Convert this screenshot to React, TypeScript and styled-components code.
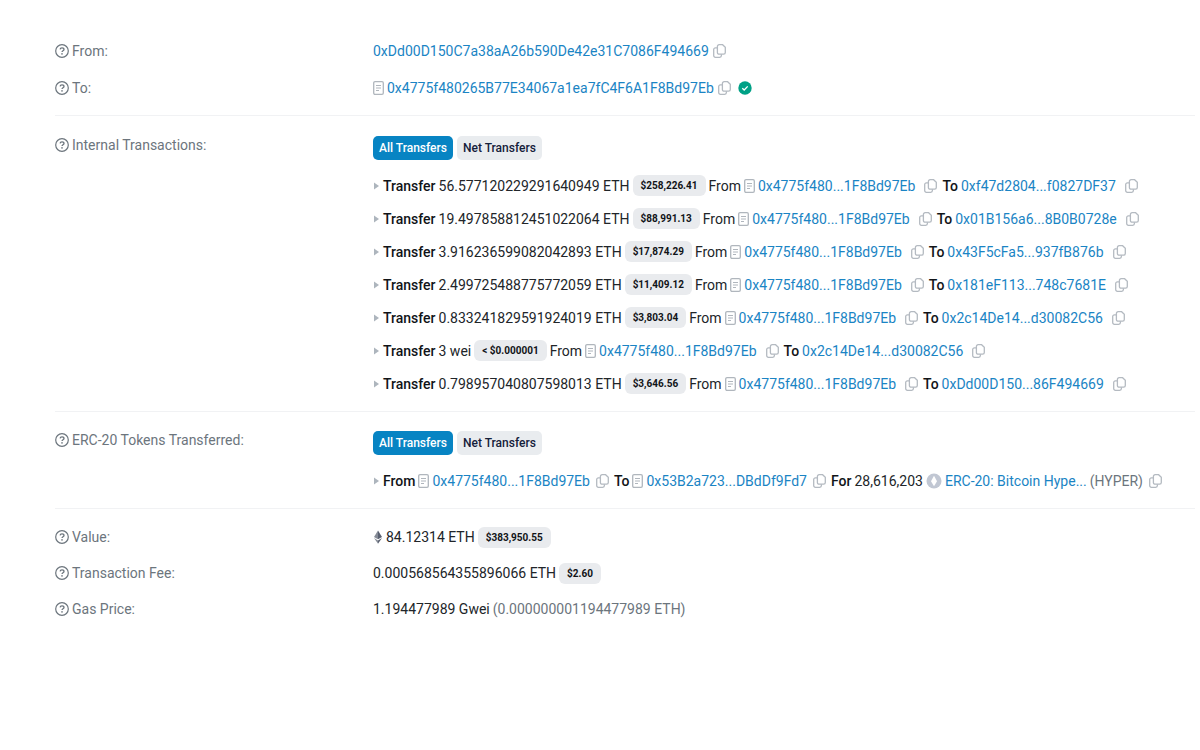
import React from "react";
import styled, { createGlobalStyle } from "styled-components";

const GlobalStyle = createGlobalStyle`
  *, *::before, *::after { box-sizing: border-box; }
  body {
    margin: 0;
    background: #ffffff;
    color: #212529;
    font-family: Roboto, "Liberation Sans", sans-serif;
    font-size: 14px;
    line-height: 24px;
  }
`;

const Page = styled.main`
  padding: 39px 5px 39px 55px;
`;

const Section = styled.dl<{ $top?: number; $bottom?: number; $gap?: number }>`
  display: flex;
  flex-direction: column;
  gap: ${(p) => p.$gap ?? 0}px;
  margin: 0;
  padding: ${(p) => p.$top ?? 0}px 0 ${(p) => p.$bottom ?? 0}px;
  & + & {
    border-top: 1px solid #f1f2f4;
  }
`;

const Field = styled.div`
  display: grid;
  grid-template-columns: 318px minmax(0, 1fr);
  align-items: start;
`;

const Label = styled.dt<{ $lift?: boolean }>`
  display: flex;
  align-items: center;
  gap: 3px;
  color: #6c757d;
  margin-top: ${(p) => (p.$lift ? -3 : 0)}px;
`;

const Value = styled.dd`
  margin: 0;
  min-width: 0;
`;

const Line = styled.div<{ $tall?: boolean }>`
  display: flex;
  align-items: center;
  white-space: nowrap;
  height: ${(p) => (p.$tall ? 33 : 24)}px;
  gap: 3px;
`;

const IconButton = styled.button<{ $gap: number }>`
  display: flex;
  margin: 0 0 0 ${(p) => p.$gap}px;
  padding: 0;
  border: 0;
  background: none;
  color: #b4bac1;
  cursor: pointer;
`;

const Party = styled.span`
  display: flex;
  align-items: center;
  gap: 3px;
  margin-right: 2px;
`;

const Status = styled.span`
  display: flex;
  margin-left: 2px;
`;

const Link = styled.a`
  color: #1a84c4;
  text-decoration: none;
`;

const Strong = styled.span`
  font-weight: 500;
  color: #111418;
`;

const Muted = styled.span`
  color: #6c757d;
`;

const Badge = styled.span`
  height: 21px;
  padding: 0 8px;
  border-radius: 6px;
  background: #e9ebee;
  color: #111418;
  font-size: 10px;
  font-weight: 700;
  line-height: 21px;
`;

const Tabs = styled.div`
  display: flex;
  gap: 4px;
  margin-bottom: 9px;
`;

const Tab = styled.button<{ $active?: boolean }>`
  height: 24px;
  padding: 0 6px;
  border: 0;
  border-radius: 5px;
  background: ${(p) => (p.$active ? "#0784c3" : "#e9ecef")};
  color: ${(p) => (p.$active ? "#ffffff" : "#14203a")};
  font: 500 12px/24px Roboto, "Liberation Sans", sans-serif;
  cursor: pointer;
`;

const Icon = styled.svg`
  display: block;
  flex: none;
`;

const HelpIcon = () => (
  <Icon width="14" height="14" viewBox="0 0 14 14" fill="none" stroke="#6c757d" aria-hidden="true">
    <circle cx="7" cy="7" r="6.3" strokeWidth="1.2" />
    <path d="M5.1 5.4c.1-1 .8-1.6 1.9-1.6 1.2 0 2 .7 2 1.6 0 1.3-2 1.3-2 2.6" strokeWidth="1.3" />
    <circle cx="7" cy="9.9" r=".8" fill="#6c757d" stroke="none" />
  </Icon>
);

const CopyButton = ({ gap }: { gap: number }) => (
  <IconButton type="button" aria-label="Copy" $gap={gap}>
    <Icon width="13" height="14" viewBox="0 0 13 14" fill="none" stroke="currentColor" strokeWidth="1.3">
      <path d="M6.1.7h3.5l2.7 2.6v5.2a1.7 1.7 0 0 1-1.7 1.7H6.1a1.7 1.7 0 0 1-1.7-1.7V2.4A1.7 1.7 0 0 1 6.1.7z" />
      <path d="M4.4 3.9h-2A1.7 1.7 0 0 0 .7 5.6v6a1.7 1.7 0 0 0 1.7 1.7h4.3a1.7 1.7 0 0 0 1.7-1.7v-1.4" />
    </Icon>
  </IconButton>
);

const ContractIcon = () => (
  <Icon width="11" height="14" viewBox="0 0 11 14" fill="none" stroke="#b0b6bd" role="img" aria-label="Contract">
    <rect x=".7" y=".7" width="9.6" height="12.6" rx="1.3" strokeWidth="1.3" />
    <path d="M3 4.5h5M3 7h5M3 9.5h3" />
  </Icon>
);

const Caret = () => (
  <Icon width="7" height="8" viewBox="0 0 7 8" fill="#adb5bd" aria-hidden="true">
    <path d="M1 .5 6 4 1 7.5z" />
  </Icon>
);

const CheckIcon = () => (
  <Icon width="14" height="14" viewBox="0 0 14 14" role="img" aria-label="Success">
    <circle cx="7" cy="7" r="6.7" fill="#00a186" />
    <path d="M4.3 7.2 6.2 9l3.5-3.6" fill="none" stroke="#fff" strokeWidth="1.3" />
  </Icon>
);

const EthIcon = () => (
  <Icon width="10" height="14" viewBox="0 0 10 14" aria-hidden="true">
    <path d="M5 .5 1 7l4 2.3z" fill="#858b96" />
    <path d="M5 .5 9 7 5 9.3z" fill="#596070" />
    <path d="m1 8 4 2.4v3.3z" fill="#858b96" />
    <path d="m9 8-4 2.4v3.3z" fill="#596070" />
  </Icon>
);

const TokenIcon = () => (
  <Icon width="16" height="16" viewBox="0 0 16 16" aria-hidden="true">
    <circle cx="8" cy="8" r="7.5" fill="#c1c7d3" />
    <path d="M8 2.7 11 8.2 8 13.3 5 8.2z" fill="#fff" />
  </Icon>
);

const Help = ({ children, lift }: { children: string; lift?: boolean }) => (
  <Label $lift={lift}>
    <HelpIcon />
    {children}
  </Label>
);

const Address = ({ hash, contract, copyGap = 6 }: { hash: string; contract?: boolean; copyGap?: number }) => (
  <Party>
    {contract && <ContractIcon />}
    <Link href="#">{hash}</Link>
    <CopyButton gap={copyGap} />
  </Party>
);

const TransferTabs = () => (
  <Tabs>
    <Tab type="button" $active>All Transfers</Tab>
    <Tab type="button">Net Transfers</Tab>
  </Tabs>
);

const CONTRACT = "0x4775f480...1F8Bd97Eb";

const transfers = [
  { amount: "56.577120229291640949 ETH", usd: "$258,226.41", to: "0xf47d2804...f0827DF37" },
  { amount: "19.497858812451022064 ETH", usd: "$88,991.13", to: "0x01B156a6...8B0B0728e" },
  { amount: "3.916236599082042893 ETH", usd: "$17,874.29", to: "0x43F5cFa5...937fB876b" },
  { amount: "2.499725488775772059 ETH", usd: "$11,409.12", to: "0x181eF113...748c7681E" },
  { amount: "0.833241829591924019 ETH", usd: "$3,803.04", to: "0x2c14De14...d30082C56" },
  { amount: "3 wei", usd: "< $0.000001", to: "0x2c14De14...d30082C56" },
  { amount: "0.798957040807598013 ETH", usd: "$3,646.56", to: "0xDd00D150...86F494669" },
];

export default function App() {
  return (
    <>
      <GlobalStyle />
      <Page>
        <Section $bottom={15} $gap={13}>
          <Field>
            <Help>From:</Help>
            <Value>
              <Line>
                <Address hash="0xDd00D150C7a38aA26b590De42e31C7086F494669" copyGap={1} />
              </Line>
            </Value>
          </Field>
          <Field>
            <Help>To:</Help>
            <Value>
              <Line>
                <Address contract hash="0x4775f480265B77E34067a1ea7fC4F6A1F8Bd97Eb" copyGap={1} />
                <Status>
                  <CheckIcon />
                </Status>
              </Line>
            </Value>
          </Field>
        </Section>

        <Section $top={20} $bottom={11}>
          <Field>
            <Help lift>Internal Transactions:</Help>
            <Value>
              <TransferTabs />
              {transfers.map((t) => (
                <Line $tall key={t.amount}>
                  <Caret />
                  <Strong>Transfer</Strong>
                  <span>{t.amount}</span>
                  <Badge>{t.usd}</Badge>
                  <span>From</span>
                  <Address contract hash={CONTRACT} />
                  <Strong>To</Strong>
                  <Address hash={t.to} />
                </Line>
              ))}
            </Value>
          </Field>
        </Section>

        <Section $top={19} $bottom={11}>
          <Field>
            <Help lift>ERC-20 Tokens Transferred:</Help>
            <Value>
              <TransferTabs />
              <Line $tall>
                <Caret />
                <Strong>From</Strong>
                <Address contract hash={CONTRACT} copyGap={3} />
                <Strong>To</Strong>
                <Address contract hash="0x53B2a723...DBdDf9Fd7" copyGap={3} />
                <Strong>For</Strong>
                <span>28,616,203</span>
                <TokenIcon />
                <Link href="#">ERC-20: Bitcoin Hype...</Link>
                <Muted>(HYPER)</Muted>
                <CopyButton gap={3} />
              </Line>
            </Value>
          </Field>
        </Section>

        <Section $top={16} $gap={12}>
          <Field>
            <Help>Value:</Help>
            <Value>
              <Line>
                <EthIcon />
                <span>84.12314 ETH</span>
                <Badge>$383,950.55</Badge>
              </Line>
            </Value>
          </Field>
          <Field>
            <Help>Transaction Fee:</Help>
            <Value>
              <Line>
                <span>0.000568564355896066 ETH</span>
                <Badge>$2.60</Badge>
              </Line>
            </Value>
          </Field>
          <Field>
            <Help>Gas Price:</Help>
            <Value>
              <Line>
                <span>1.194477989 Gwei</span>
                <Muted>(0.000000001194477989 ETH)</Muted>
              </Line>
            </Value>
          </Field>
        </Section>
      </Page>
    </>
  );
}
